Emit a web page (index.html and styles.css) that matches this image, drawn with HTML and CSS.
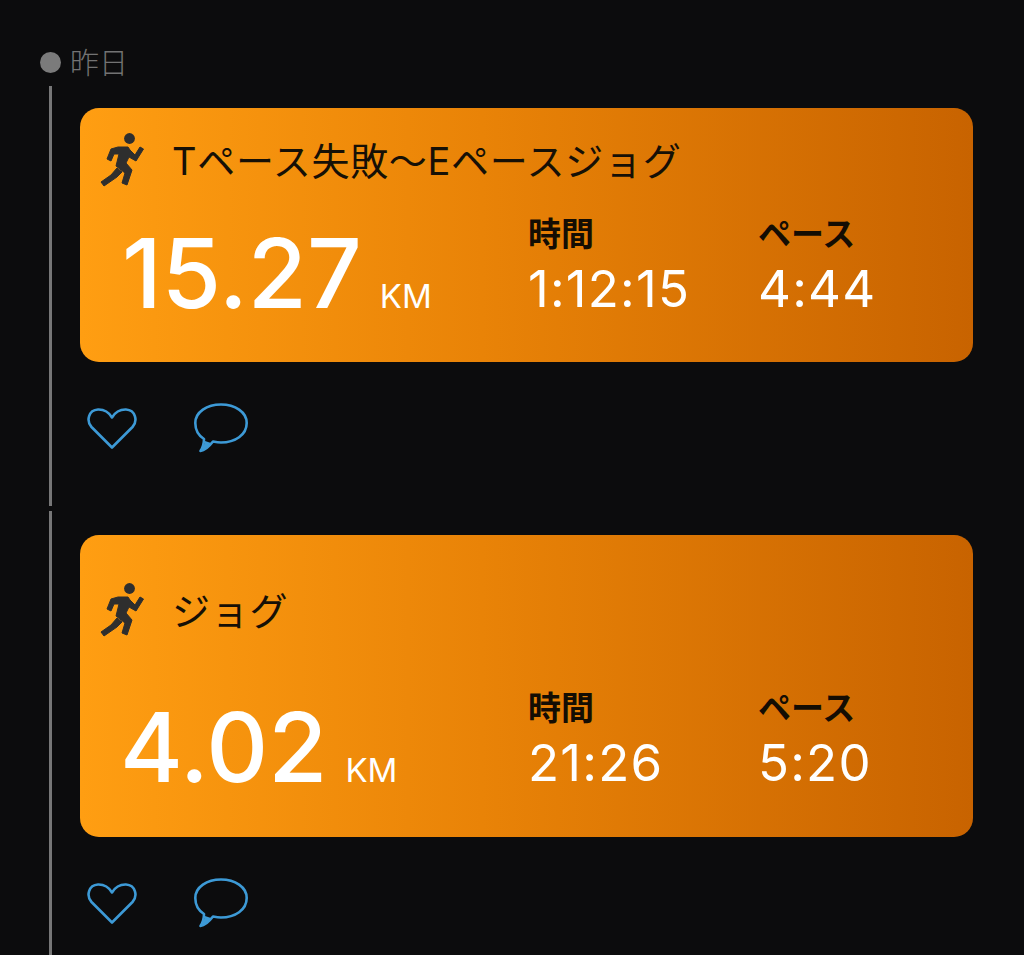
FILE: index.html
```html
<!DOCTYPE html>
<html lang="ja">
<head>
    <meta charset="UTF-8">
    <meta name="viewport" content="width=device-width, initial-scale=1.0">
    <title>アクティビティ</title>
    <link rel="stylesheet" href="styles.css">
</head>
<body>
    <svg class="icon-defs" width="0" height="0">
        <symbol id="runner" viewBox="0 3 48 56">
            <circle cx="31.5" cy="8.500" r="5.400" fill="#2e2e2e"/>
            <path d="M20 17 L30 17 L32 20 L37 25 L42 17 L45.500 19 L38 31 L31 27 L28 33 L34 40 L29 55 L24 53 L27 43 L18 36 L21 24 L16 24 L13 31 L9 29 L13 19 Z" fill="#2e2e2e" stroke="#2e2e2e" stroke-width="1" stroke-linejoin="round"/>
            <path d="M19 38 L24 42 L19 47 L6 56 L3 52 L13 45 Z" fill="#2e2e2e" stroke="#2e2e2e" stroke-width="1" stroke-linejoin="round"/>
        </symbol>
        <symbol id="heart" viewBox="0 0 50 41">
            <path d="M25 39.500 L4.500 19 C-1 13 1.500 2 11 1.500 C17 1.300 22 4.500 25 9.500 C28 4.500 33 1.300 39 1.500 C48.500 2 51 13 45.500 19 Z" fill="none" stroke="currentColor" stroke-width="2.600" stroke-linejoin="round"/>
        </symbol>
        <symbol id="bubble" viewBox="0 0 54 50">
            <path d="M27 1.500 C41 1.500 52.700 9 52.700 20 C52.700 32 41 39.500 27 39.500 C24 39.500 21.500 39 19 38.500 C15.500 43 11 47.500 6.500 48 C8.500 45 10 41 10 36 C4.500 32.500 1.300 27 1.300 20 C1.300 9 13 1.500 27 1.500 Z" fill="none" stroke="currentColor" stroke-width="2.600" stroke-linejoin="round"/>
            <path d="M6.500 48 C11 47.500 15.500 43 17 40 L11 38 C10.500 42 8.500 45 6.500 48 Z" fill="currentColor"/>
        </symbol>
    </svg>

    <div class="timeline">
        <div class="day">
            <span class="day-dot"></span>
            <span class="day-label">昨日</span>
        </div>

        <div class="entry">
            <div class="card">
                <div class="card-head">
                    <svg class="runner"><use href="#runner"/></svg>
                    <span class="card-title">Tペース失敗〜Eペースジョグ</span>
                </div>
                <div class="stats">
                    <div class="distance"><span class="distance-num">15.27</span><span class="distance-unit">KM</span></div>
                    <div class="stat">
                        <div class="stat-label">時間</div>
                        <div class="stat-value">1:12:15</div>
                    </div>
                    <div class="stat">
                        <div class="stat-label">ペース</div>
                        <div class="stat-value">4:44</div>
                    </div>
                </div>
            </div>
            <div class="actions">
                <svg class="heart"><use href="#heart"/></svg>
                <svg class="bubble"><use href="#bubble"/></svg>
            </div>
        </div>

        <div class="entry entry-last">
            <div class="card card-tall">
                <div class="card-head">
                    <svg class="runner"><use href="#runner"/></svg>
                    <span class="card-title">ジョグ</span>
                </div>
                <div class="stats">
                    <div class="distance"><span class="distance-num">4.02</span><span class="distance-unit">KM</span></div>
                    <div class="stat">
                        <div class="stat-label">時間</div>
                        <div class="stat-value">21:26</div>
                    </div>
                    <div class="stat">
                        <div class="stat-label">ペース</div>
                        <div class="stat-value">5:20</div>
                    </div>
                </div>
            </div>
            <div class="actions">
                <svg class="heart"><use href="#heart"/></svg>
                <svg class="bubble"><use href="#bubble"/></svg>
            </div>
        </div>
    </div>
</body>
</html>
```

FILE: styles.css
```css
html, body {
    height: 100%;
}
body {
    margin: 0;
    background-color: #0c0c0d;
    font-family: Inter, "Noto Sans CJK JP", sans-serif;
    overflow: hidden;
}
.icon-defs {
    display: block;
}
.timeline {
    padding: 52px 51px 0 40px;
}
.day {
    display: flex;
    align-items: center;
    height: 20px;
    gap: 9px;
}
.day-dot {
    width: 21px;
    height: 21px;
    border-radius: 50%;
    background-color: #7b7b7b;
}
.day-label {
    margin-top: -3px;
    font-family: "Noto Sans CJK JP", sans-serif;
    font-size: 29px;
    font-weight: 300;
    color: #737373;
}
.entry {
    margin: 14px 0 0 9px;
    padding: 22px 0 0 28px;
    height: 398px;
    border-left: 3px solid #777;
}
.entry-last {
    margin-top: 5px;
    padding-top: 24px;
    height: 420px;
}
.card {
    height: 254px;
    box-sizing: border-box;
    padding: 25px 0 0 18px;
    border-radius: 19px;
    background: linear-gradient(90deg, #ff9e12 0%, #e98307 45%, #c86300 100%);
}
.card-tall {
    height: 302px;
    padding-top: 48px;
}
.card-head {
    display: flex;
    align-items: center;
    gap: 26px;
    height: 56px;
}
.runner {
    width: 48px;
    height: 56px;
    flex-shrink: 0;
}
.card-title {
    margin-top: -6px;
    font-size: 38px;
    font-weight: 400;
    letter-spacing: 0.7px;
    color: #161006;
    white-space: nowrap;
}
.stats {
    display: grid;
    grid-template-columns: 406px 230px 1fr;
    align-items: end;
    margin: 23px 0 0 24px;
    color: #fff;
}
.card-tall .stats {
    margin-top: 47px;
}
.distance {
    margin-bottom: -2px;
    white-space: nowrap;
}
.card-tall .distance {
    margin-left: -2px;
}
.distance-num {
    font-size: 96px;
    font-weight: 500;
    line-height: 96px;
}
.distance-unit {
    margin-left: 18px;
    font-size: 33px;
    font-weight: 400;
}
.stat-label {
    font-family: "Noto Sans CJK JP", sans-serif;
    font-size: 33px;
    font-weight: 700;
    line-height: 40px;
    color: #140d03;
}
.stat-value {
    margin-top: 7px;
    font-size: 51px;
    font-weight: 400;
    letter-spacing: 1.200px;
    line-height: 60px;
}
.actions {
    display: flex;
    align-items: center;
    gap: 57px;
    margin: 41px 0 0 7px;
    color: #3d9ad6;
}
.heart {
    width: 50px;
    height: 41px;
}
.bubble {
    width: 54px;
    height: 50px;
}
```
